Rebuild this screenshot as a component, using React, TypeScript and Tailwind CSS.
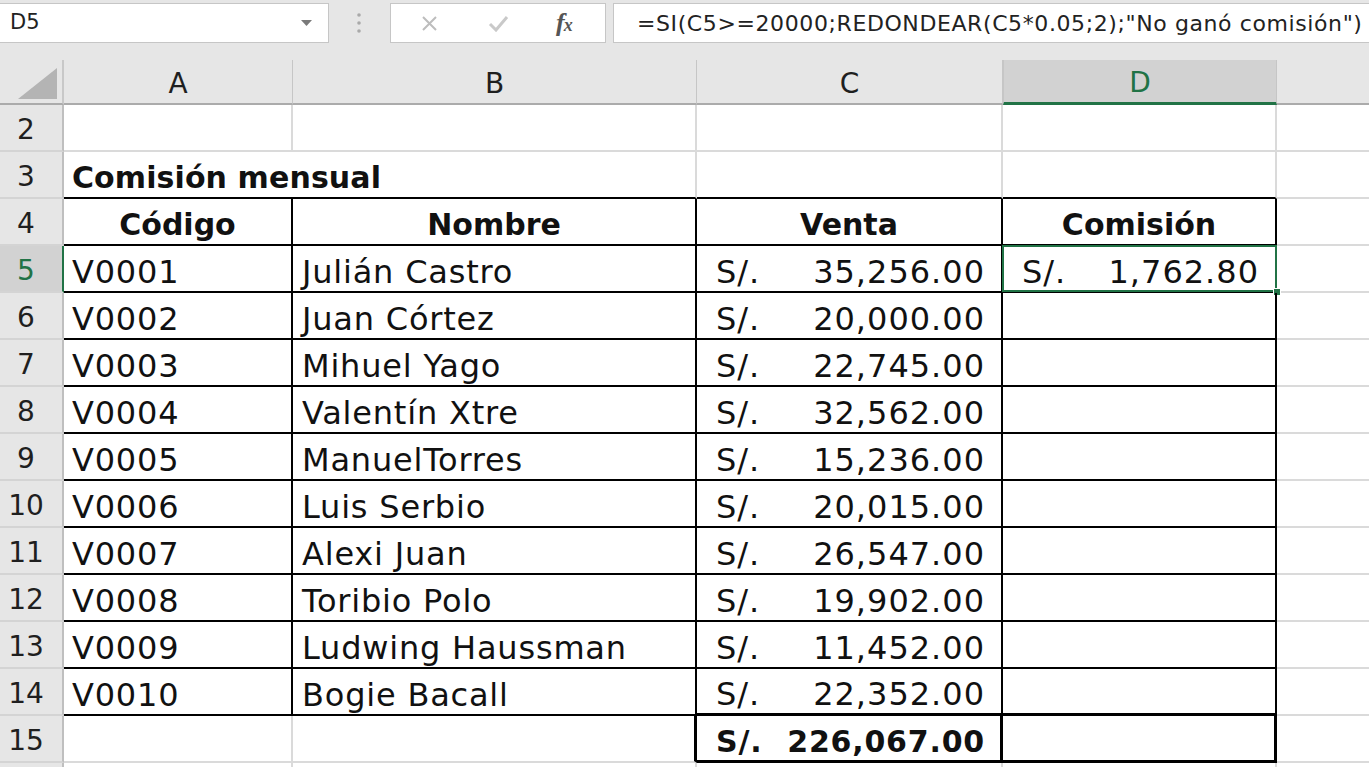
import React from "react";

const LR = "border-r-2 border-r-[#dadada]";
const LB = "border-b-2 border-b-[#dadada]";
const BR = "border-r-2 border-r-black";
const BB = "border-b-2 border-b-black";
const TR = "border-r-[3px] border-r-black";
const TB = "border-b-[3px] border-b-black";

const data: [string, string, string][] = [
  ["V0001", "Julián Castro", "35,256.00"],
  ["V0002", "Juan Córtez", "20,000.00"],
  ["V0003", "Mihuel Yago", "22,745.00"],
  ["V0004", "Valentín Xtre", "32,562.00"],
  ["V0005", "ManuelTorres", "15,236.00"],
  ["V0006", "Luis Serbio", "20,015.00"],
  ["V0007", "Alexi Juan", "26,547.00"],
  ["V0008", "Toribio Polo", "19,902.00"],
  ["V0009", "Ludwing Haussman", "11,452.00"],
  ["V0010", "Bogie Bacall", "22,352.00"],
];

function RowHead({ n, active }: { n?: number; active?: boolean }) {
  return (
    <div
      className={
        active
          ? "w-[64px] shrink-0 h-full flex items-center justify-center pr-[10px] pt-[5px] bg-[#d2d2d2] text-[#217346] border-r-2 border-r-[#217346] border-b-2 border-b-[#d4d4d4] text-[28px] font-normal tracking-normal"
          : "w-[64px] shrink-0 h-full flex items-center justify-center pr-[10px] pt-[5px] bg-[#e6e6e6] text-[#1f1f1f] border-r-2 border-r-[#bfbfbf] border-b-2 border-b-[#d4d4d4] text-[28px] font-normal tracking-normal"
      }
    >
      {n}
    </div>
  );
}

function Money({ v, bold }: { v: string; bold?: boolean }) {
  return (
    <div
      className={
        bold
          ? "w-full flex items-center justify-between pl-[19px] pr-[15px] font-bold text-[30px] tracking-[0.8px]"
          : "w-full flex items-center justify-between pl-[19px] pr-[16px] text-[32px] tracking-[1px]"
      }
    >
      <span>S/.</span>
      <span>{v}</span>
    </div>
  );
}

export default function App() {
  return (
    <div className="w-full h-[767px] overflow-hidden bg-white font-['DejaVu_Sans',sans-serif] text-[#111]">
      {/* Formula bar */}
      <div className="h-[60px] bg-[#e6e6e6] flex items-start pt-[3px]">
        <div className="w-[329px] h-[40px] shrink-0 bg-white border border-l-0 border-[#c6c6c6] flex items-center justify-between pl-[10px] pr-[16px]">
          <span className="text-[21px] text-[#222]">D5</span>
          <svg width="11" height="6" viewBox="0 0 11 6">
            <polygon points="0,0 11,0 5.5,6" fill="#7a7a7a" />
          </svg>
        </div>
        <div className="w-[61px] h-[40px] shrink-0 flex items-center justify-center pr-[1px]">
          <svg width="6" height="22" viewBox="0 0 6 22">
            <circle cx="3" cy="3" r="1.8" fill="#a9a9a9" />
            <circle cx="3" cy="11" r="1.8" fill="#a9a9a9" />
            <circle cx="3" cy="19" r="1.8" fill="#a9a9a9" />
          </svg>
        </div>
        <div className="w-[216px] h-[40px] shrink-0 bg-white border border-[#c6c6c6] flex items-center pl-[30px]">
          <svg width="17" height="17" viewBox="0 0 17 17">
            <path d="M2 2 L15 15 M15 2 L2 15" stroke="#bdbdbd" strokeWidth="2" fill="none" />
          </svg>
          <svg className="ml-[50px]" width="21" height="17" viewBox="0 0 21 17">
            <path d="M2 9 L8 15 L19 2" stroke="#c9c9c9" strokeWidth="3" fill="none" />
          </svg>
          <span className="ml-[47px] font-['Liberation_Serif',serif] italic font-bold text-[#555] leading-none flex items-baseline">
            <span className="text-[26px]">f</span>
            <span className="text-[18px] -ml-[1px]">x</span>
          </span>
        </div>
        <div className="w-[7px] shrink-0" />
        <div className="flex-1 min-w-0 h-[40px] bg-white border border-r-0 border-[#c6c6c6] flex items-center pl-[23px] text-[22px] tracking-[0.6px] whitespace-nowrap overflow-hidden text-[#222]">
          =SI(C5&gt;=20000;REDONDEAR(C5*0.05;2);"No ganó comisión")
        </div>
      </div>

      {/* Column headers */}
      <div className="h-[45px] flex bg-[#e6e6e6] text-[28px] text-[#1f1f1f]">
        <div className="w-[64px] shrink-0 h-full border-r-2 border-r-[#c8c8c8] border-b-2 border-b-[#ababab] relative">
          <svg className="absolute left-0 top-0" width="62" height="43" viewBox="0 0 62 43">
            <polygon points="18,39 57,39 57,8" fill="#b4b4b4" />
          </svg>
        </div>
        <div className="w-[229px] shrink-0 h-full flex items-center justify-center pt-[4px] border-r border-r-[#c6c6c6] border-b-2 border-b-[#ababab]">A</div>
        <div className="w-[404px] shrink-0 h-full flex items-center justify-center pt-[4px] border-r border-r-[#c6c6c6] border-b-2 border-b-[#ababab]">B</div>
        <div className="w-[306px] shrink-0 h-full flex items-center justify-center pt-[4px] border-r border-r-[#c6c6c6] border-b-2 border-b-[#ababab]">C</div>
        <div className="w-[274px] shrink-0 h-full flex items-center justify-center pt-[4px] bg-[#d2d2d2] text-[#217346] border-x border-x-[#c6c6c6] border-b-[3px] border-b-[#217346]">D</div>
        <div className="flex-1 h-full border-b-2 border-b-[#ababab]" />
      </div>

      {/* Row 2 */}
      <div className="h-[47px] flex">
        <RowHead n={2} />
        <div className={`w-[229px] shrink-0 ${LR} ${LB}`} />
        <div className={`w-[404px] shrink-0 ${LR} ${LB}`} />
        <div className={`w-[306px] shrink-0 ${LR} ${LB}`} />
        <div className={`w-[274px] shrink-0 ${LR} ${LB}`} />
        <div className={`flex-1 ${LB}`} />
      </div>

      {/* Row 3 */}
      <div className="h-[47px] flex">
        <RowHead n={3} />
        <div className={`w-[229px] shrink-0 flex items-center pl-[8px] pt-[6px] whitespace-nowrap overflow-visible font-bold text-[30px] tracking-[0.1px] ${BB}`}>
          Comisión mensual
        </div>
        <div className={`w-[404px] shrink-0 ${LR} ${BB}`} />
        <div className={`w-[306px] shrink-0 ${LR} ${BB}`} />
        <div className={`w-[274px] shrink-0 ${LR} ${BB}`} />
        <div className={`flex-1 ${LB}`} />
      </div>

      {/* Row 4 */}
      <div className="h-[47px] flex">
        <RowHead n={4} />
        <div className={`w-[229px] shrink-0 flex items-center justify-center pt-[6px] font-bold text-[30px] ${BR} ${BB}`}>Código</div>
        <div className={`w-[404px] shrink-0 flex items-center justify-center pt-[6px] font-bold text-[30px] ${BR} ${BB}`}>Nombre</div>
        <div className={`w-[306px] shrink-0 flex items-center justify-center pt-[6px] font-bold text-[30px] ${BR} ${BB}`}>Venta</div>
        <div className={`w-[274px] shrink-0 flex items-center justify-center pt-[6px] font-bold text-[30px] ${BR} ${BB}`}>Comisión</div>
        <div className={`flex-1 ${LB}`} />
      </div>

      {/* Data rows 5-14 */}
      {data.map(([code, name, venta], i) => {
        const last = i === data.length - 1;
        return (
          <div key={code} className="h-[47px] flex">
            <RowHead n={i + 5} active={i === 0} />
            <div className={`w-[229px] shrink-0 flex items-center pl-[8px] pt-[6px] whitespace-nowrap text-[32px] tracking-[0.8px] ${BR} ${BB}`}>{code}</div>
            <div className={`w-[404px] shrink-0 flex items-center pl-[9px] pt-[6px] whitespace-nowrap text-[32px] tracking-[0.8px] ${BR} ${BB}`}>{name}</div>
            <div className={`w-[306px] shrink-0 flex items-center pt-[6px] ${BR} ${last ? TB : BB}`}>
              <Money v={venta} />
            </div>
            <div className={`w-[274px] shrink-0 flex items-center pt-[6px] relative ${BR} ${last ? TB : BB}`}>
              {i === 0 && (
                <>
                  <Money v="1,762.80" />
                  <div className="absolute left-[-1px] top-[-1px] right-[-2px] bottom-[-1px] border-2 border-[#217346]" />
                  <div className="absolute right-[-6px] bottom-[-5px] w-[8px] h-[8px] bg-[#217346] border border-white" />
                </>
              )}
            </div>
            <div className={`flex-1 ${LB}`} />
          </div>
        );
      })}

      {/* Row 15 */}
      <div className="h-[47px] flex">
        <RowHead n={15} />
        <div className={`w-[229px] shrink-0 ${LR} ${LB}`} />
        <div className={`w-[404px] shrink-0 ${TR} ${LB}`} />
        <div className={`w-[306px] shrink-0 flex items-center pt-[6px] ${TR} ${TB}`}>
          <Money v="226,067.00" bold />
        </div>
        <div className={`w-[274px] shrink-0 ${TR} ${TB}`} />
        <div className={`flex-1 ${LB}`} />
      </div>
      <div className="h-[47px] flex">
        <RowHead />
        <div className={`w-[229px] shrink-0 ${LR} ${LB}`} />
        <div className={`w-[404px] shrink-0 ${LR} ${LB}`} />
        <div className={`w-[306px] shrink-0 ${LR} ${LB}`} />
        <div className={`w-[274px] shrink-0 ${LR} ${LB}`} />
        <div className={`flex-1 ${LB}`} />
      </div>
    </div>
  );
}
